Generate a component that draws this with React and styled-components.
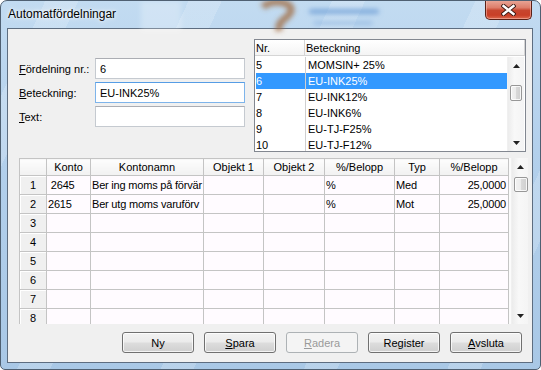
import React from 'react';
import styled, { createGlobalStyle } from 'styled-components';

const GlobalStyle = createGlobalStyle`
  body {
    margin: 0;
    font-family: "Liberation Sans", Arial, sans-serif;
    font-size: 11px;
    color: #000;
  }
`;

const Window = styled.div`
  position: relative;
  width: 541px;
  height: 370px;
  box-sizing: border-box;
  display: flex;
  flex-direction: column;
  padding: 0 7px 6px 6px;
  border: 1px solid #4f6072;
  border-radius: 7px 7px 5px 5px;
  overflow: hidden;
  background:
    repeating-linear-gradient(115deg, rgba(255,255,255,0) 0 40px, rgba(255,255,255,0.18) 40px 70px, rgba(255,255,255,0) 70px 130px),
    linear-gradient(180deg, #c2dbf1 0%, #b3d0ec 40%, #a9c8e6 100%);
`;

const GlassBlur = styled.svg`
  position: absolute;
  left: 0;
  top: 0;
  pointer-events: none;
`;

const TitleBar = styled.div`
  position: relative;
  height: 27px;
  display: flex;
  align-items: flex-start;
  justify-content: space-between;
`;

const Title = styled.span`
  margin: 6px 0 0 1px;
  font-size: 12px;
  line-height: 14px;
  text-shadow: 0 0 6px rgba(255, 255, 255, 0.9), 0 0 3px rgba(255, 255, 255, 0.9);
`;

const CloseButton = styled.div`
  width: 47px;
  height: 20px;
  margin: -1px 1px 0 0;
  box-sizing: border-box;
  display: flex;
  align-items: center;
  justify-content: center;
  border: 1px solid #5a2016;
  border-top: none;
  border-radius: 0 0 5px 5px;
  background: linear-gradient(180deg, #e9a99a 0%, #dd7e6b 40%, #c7452e 55%, #c93f27 80%, #dc6a4e 100%);
  box-shadow: inset 0 0 0 1px rgba(255, 200, 190, 0.5);
`;

const Client = styled.div`
  flex: 1;
  display: flex;
  flex-direction: column;
  background: #f0f0f0;
  border: 1px solid #5d6d80;
`;

const TopSection = styled.div`
  display: flex;
  align-items: flex-start;
  margin-top: 10px;
`;

const Form = styled.div`
  display: grid;
  grid-template-columns: 76px 150px;
  grid-auto-rows: 21px;
  row-gap: 3px;
  margin: 19px 0 0 11px;
`;

const Label = styled.label`
  display: flex;
  align-items: center;
`;

const Field = styled.input`
  box-sizing: border-box;
  width: 150px;
  height: 21px;
  margin: 0;
  padding: 0 4px;
  font-family: inherit;
  font-size: 11px;
  color: #000;
  background: #fff;
  border: 1px solid ${(p) => (p.$focused ? '#7eb4ea' : '#c5cad0')};
  border-top-color: ${(p) => (p.$focused ? '#569de5' : '#abadb3')};
  outline: none;
`;

const ListBox = styled.div`
  box-sizing: border-box;
  width: 272px;
  height: 113px;
  margin-left: 9px;
  display: flex;
  flex-direction: column;
  background: #fff;
  border: 1px solid #828790;
  overflow: hidden;
`;

const ListHeader = styled.div`
  display: grid;
  grid-template-columns: 50px 1fr;
  height: 15px;
  flex: none;
  background: linear-gradient(180deg, #ffffff 0%, #f4f4f4 100%);
  border-bottom: 1px solid #d5d5d5;
`;

const ListHeaderCell = styled.div`
  display: flex;
  align-items: center;
  padding-left: 1px;
  border-right: 1px solid #d5d5d5;
`;

const ListBody = styled.div`
  flex: 1;
  display: flex;
  padding-top: 1px;
  min-height: 0;
`;

const ListRows = styled.div`
  flex: 1;
  overflow: hidden;
`;

const ListRow = styled.div`
  display: grid;
  grid-template-columns: 49px 1fr;
  height: 16px;
  margin-left: 1px;
  background: ${(p) => (p.$selected ? '#3399ff' : 'transparent')};
  color: ${(p) => (p.$selected ? '#fff' : '#000')};
`;

const ListCell = styled.div`
  display: flex;
  align-items: center;
  padding-left: ${(p) => (p.$second ? '2px' : '0')};
  border-left: ${(p) => (p.$second ? '1px solid #cfcfcf' : 'none')};
  white-space: nowrap;
`;

const ScrollTrack = styled.div`
  width: ${(p) => p.$width}px;
  margin-right: ${(p) => p.$right}px;
  flex: none;
  display: flex;
  flex-direction: column;
  align-items: center;
  background: linear-gradient(90deg, #ececec 0%, #f8f8f8 40%, #f4f4f4 100%);
  border-left: 1px solid #f0f0f0;
`;

const ArrowBox = styled.div`
  height: 17px;
  width: 100%;
  display: flex;
  align-items: center;
  justify-content: center;
  flex: none;
`;

const Thumb = styled.div`
  box-sizing: border-box;
  width: ${(p) => p.$w}px;
  height: ${(p) => p.$h}px;
  margin-top: ${(p) => p.$top}px;
  border: 1px solid #979797;
  border-radius: 2px;
  background: linear-gradient(90deg, #f2f2f2 0%, #ebebeb 50%, #d9d9d9 51%, #cfcfcf 100%);
  box-shadow: inset 0 0 0 1px rgba(255, 255, 255, 0.8);
`;

const Spacer = styled.div`
  flex: 1;
`;

const GridFrame = styled.div`
  box-sizing: border-box;
  width: 509px;
  height: 166px;
  margin: 6px 0 0 11px;
  display: flex;
  overflow: hidden;
  background: #fbfbfb;
`;

const GridScroll = styled.div`
  flex: none;
  width: 492px;
  overflow: hidden;
`;

const Table = styled.table`
  border-collapse: collapse;
  table-layout: fixed;
  width: 489px;
  font-size: 11px;
`;

const HeadCell = styled.th`
  height: 16px;
  padding: 0;
  font-weight: normal;
  text-align: center;
  border: 1px solid #c4c4c4;
  background: linear-gradient(180deg, #fdfdfd 0%, #f1f1f1 100%);
  white-space: nowrap;
  overflow: hidden;
`;

const RowNum = styled.td`
  height: 18px;
  padding: 0;
  text-align: center;
  border: 1px solid #c4c4c4;
  background: #f0f0f0;
  box-shadow: inset 1px 1px 0 #ffffff;
`;

const Cell = styled.td`
  height: 18px;
  padding: 0 ${(p) => (p.$right ? '2px' : '1px')} 0 1px;
  text-align: ${(p) => (p.$right ? 'right' : 'left')};
  letter-spacing: -0.2px;
  border: 1px solid #c4c4c4;
  background: #fffbff;
  white-space: pre;
  overflow: hidden;
`;

const ButtonRow = styled.div`
  display: flex;
  justify-content: flex-end;
  gap: 10px;
  margin-top: 8px;
  padding-right: 10px;
`;

const Button = styled.button`
  box-sizing: border-box;
  width: 72px;
  height: 21px;
  padding: 0;
  font-family: inherit;
  font-size: 11px;
  color: #000;
  border: 1px solid #707070;
  border-radius: 3px;
  background: linear-gradient(180deg, #f2f2f2 0%, #ebebeb 48%, #dddddd 52%, #cfcfcf 100%);
  box-shadow: inset 0 0 0 1px rgba(255, 255, 255, 0.75);

  &:disabled {
    color: #9a9a9a;
    border-color: #adb2b5;
    background: #f4f4f4;
    box-shadow: none;
  }
`;

const UpArrow = () => (
  <svg width="7" height="4" viewBox="0 0 7 4">
    <path d="M3.5 0 L7 4 L0 4 Z" fill="#222" />
  </svg>
);

const DownArrow = () => (
  <svg width="7" height="4" viewBox="0 0 7 4">
    <path d="M0 0 L7 0 L3.5 4 Z" fill="#222" />
  </svg>
);

const ScrollBar = ({ width, right, thumbW, thumbH, thumbTop }) => (
  <ScrollTrack $width={width} $right={right}>
    <ArrowBox><UpArrow /></ArrowBox>
    <Thumb $w={thumbW} $h={thumbH} $top={thumbTop} />
    <Spacer />
    <ArrowBox><DownArrow /></ArrowBox>
  </ScrollTrack>
);

const listItems = [
  ['5', 'MOMSIN+ 25%'],
  ['6', 'EU-INK25%'],
  ['7', 'EU-INK12%'],
  ['8', 'EU-INK6%'],
  ['9', 'EU-TJ-F25%'],
  ['10', 'EU-TJ-F12%'],
];

const columns = [
  ['', 27],
  ['Konto', 44],
  ['Kontonamn', 113],
  ['Objekt 1', 60],
  ['Objekt 2', 61],
  ['%/Belopp', 70],
  ['Typ', 45],
  ['%/Belopp', 69],
];

const gridRows = [
  [' 2645', 'Ber ing moms på förvär', '', '', '%', 'Med', '25,0000'],
  ['2615', 'Ber utg moms varuförv', '', '', '%', 'Mot', '25,0000'],
  ['', '', '', '', '', '', ''],
  ['', '', '', '', '', '', ''],
  ['', '', '', '', '', '', ''],
  ['', '', '', '', '', '', ''],
  ['', '', '', '', '', '', ''],
  ['', '', '', '', '', '', ''],
];

export default function App() {
  return (
    <>
      <GlobalStyle />
      <Window>
        <GlassBlur width="541" height="40" viewBox="0 0 541 40">
          <defs>
            <filter id="soft" x="-50%" y="-50%" width="200%" height="200%">
              <feGaussianBlur stdDeviation="2.5" />
            </filter>
          </defs>
          <g filter="url(#soft)">
            <path d="M262 6 C270 -2 292 0 290 10 C288 18 276 18 278 30" stroke="#a0673a" strokeWidth="7" fill="none" opacity="0.75" />
            <rect x="308" y="8" width="70" height="5" rx="2" fill="#6e9fd6" opacity="0.8" />
            <rect x="312" y="20" width="60" height="4" rx="2" fill="#8fb5e0" opacity="0.7" />
            <rect x="140" y="0" width="40" height="30" fill="#ffffff" opacity="0.25" />
          </g>
        </GlassBlur>
        <TitleBar>
          <Title>Automatfördelningar</Title>
          <CloseButton>
            <svg width="15" height="12" viewBox="0 0 15 12">
              <path d="M2.5 2 L12.5 10 M12.5 2 L2.5 10" stroke="#3b1a14" strokeWidth="4.2" strokeLinecap="square" />
              <path d="M2.5 2 L12.5 10 M12.5 2 L2.5 10" stroke="#fff" strokeWidth="2.4" strokeLinecap="square" />
            </svg>
          </CloseButton>
        </TitleBar>
        <Client>
          <TopSection>
            <Form>
              <Label><span><u>F</u>ördelning nr.:</span></Label>
              <Field readOnly value="6" />
              <Label><span><u>B</u>eteckning:</span></Label>
              <Field readOnly value="EU-INK25%" $focused />
              <Label><span><u>T</u>ext:</span></Label>
              <Field readOnly value="" />
            </Form>
            <ListBox>
              <ListHeader>
                <ListHeaderCell>Nr.</ListHeaderCell>
                <ListHeaderCell>Beteckning</ListHeaderCell>
              </ListHeader>
              <ListBody>
                <ListRows>
                  {listItems.map(([nr, name]) => (
                    <ListRow key={nr} $selected={nr === '6'}>
                      <ListCell>{nr}</ListCell>
                      <ListCell $second>{name}</ListCell>
                    </ListRow>
                  ))}
                </ListRows>
                <ScrollBar width={16} right={1} thumbW={12} thumbH={16} thumbTop={11} />
              </ListBody>
            </ListBox>
          </TopSection>

          <GridFrame>
            <GridScroll>
              <Table>
                <colgroup>
                  {columns.map(([, w], i) => (
                    <col key={i} style={{ width: w }} />
                  ))}
                </colgroup>
                <thead>
                  <tr>
                    {columns.map(([label], i) => (
                      <HeadCell key={i}>{label}</HeadCell>
                    ))}
                  </tr>
                </thead>
                <tbody>
                  {gridRows.map((row, r) => (
                    <tr key={r}>
                      <RowNum>{r + 1}</RowNum>
                      {row.map((v, c) => (
                        <Cell key={c} $right={c === 6}>{v}</Cell>
                      ))}
                    </tr>
                  ))}
                </tbody>
              </Table>
            </GridScroll>
            <Spacer />
            <ScrollBar width={17} right={0} thumbW={14} thumbH={15} thumbTop={2} />
          </GridFrame>

          <ButtonRow>
            <Button>Ny</Button>
            <Button><u>S</u>para</Button>
            <Button disabled><u>R</u>adera</Button>
            <Button>Re<u>g</u>ister</Button>
            <Button><u>A</u>vsluta</Button>
          </ButtonRow>
        </Client>
      </Window>
    </>
  );
}
